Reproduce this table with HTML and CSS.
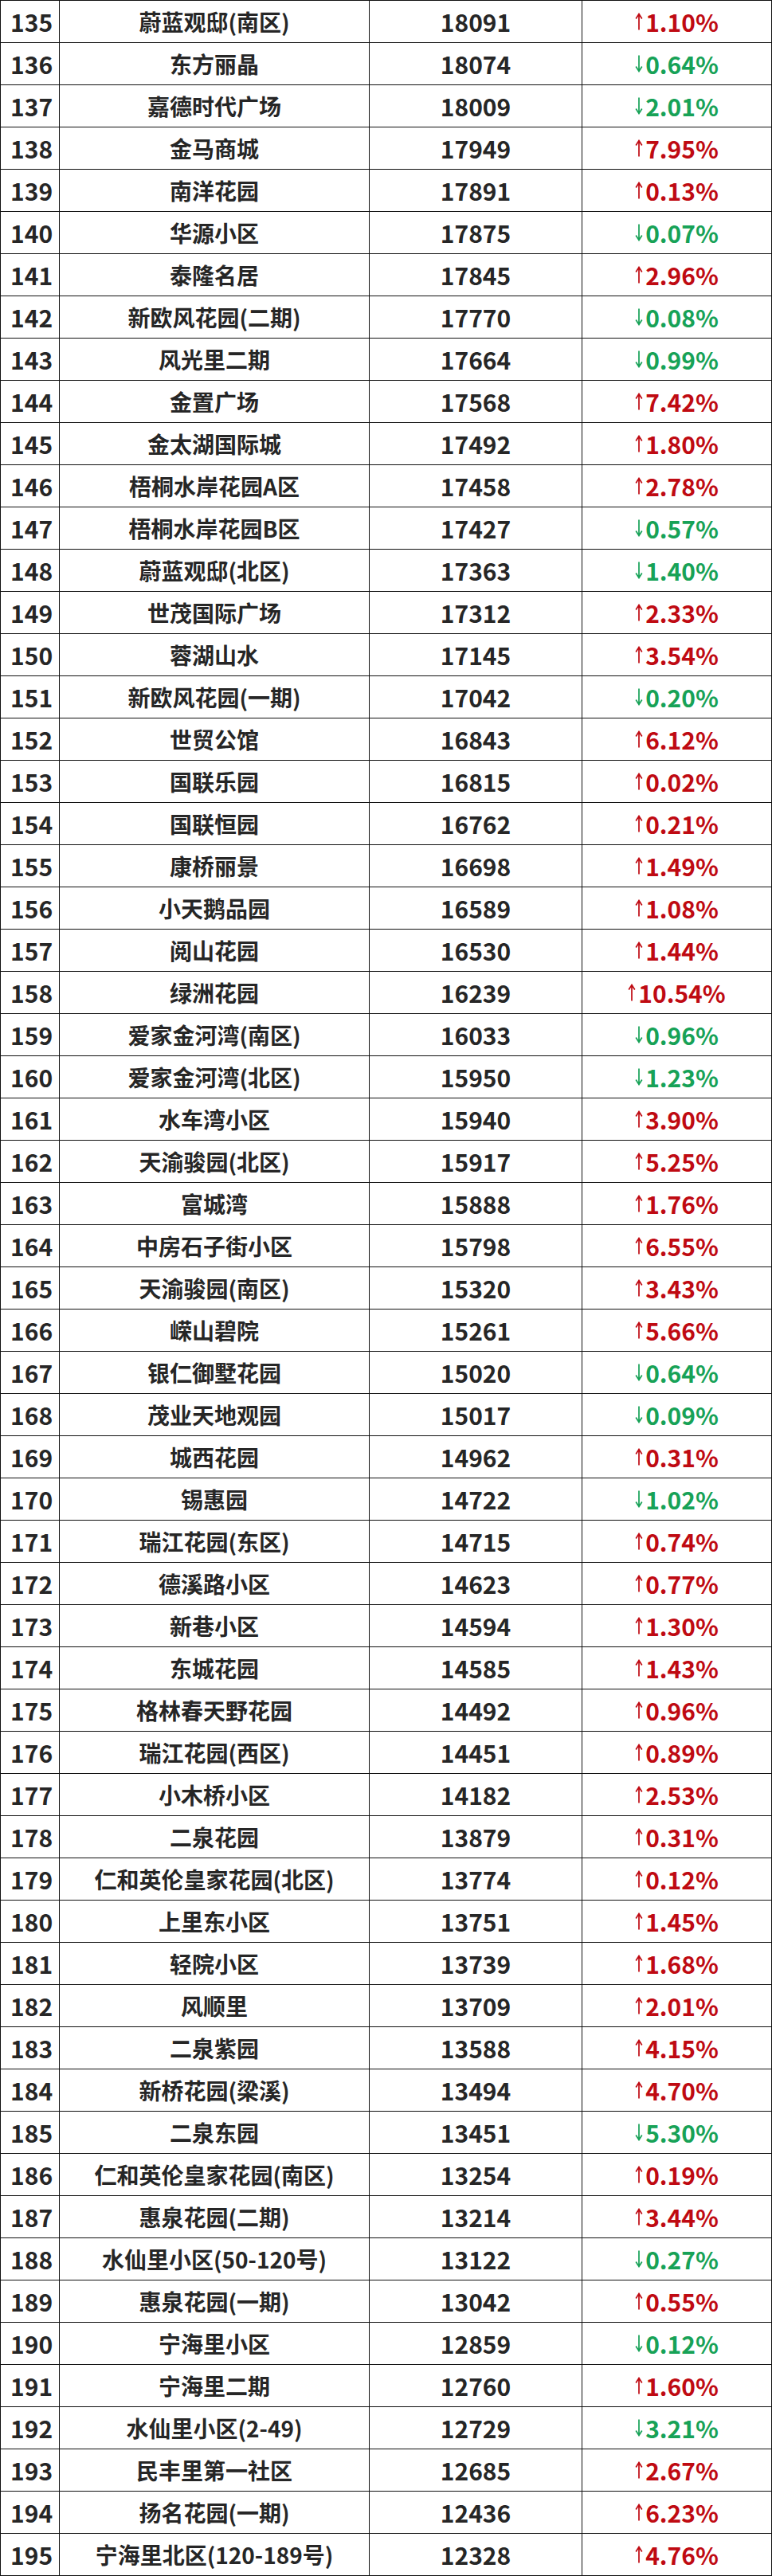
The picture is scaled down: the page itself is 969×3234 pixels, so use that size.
FILE: index.html
```html
<!DOCTYPE html>
<html lang="zh-CN">
<head>
<meta charset="utf-8">
<title>房价排行</title>
<link rel="stylesheet" href="styles.css">
</head>
<body>
<svg class="defs" width="0" height="0" aria-hidden="true">
  <symbol id="up" viewBox="0 0 10 22"><path d="M5 21.5V2 M1.2 7.5L5 1.5L8.8 7.5" fill="none" stroke="currentColor" stroke-width="1.7"/></symbol>
  <symbol id="down" viewBox="0 0 10 22"><path d="M5 0.5V20 M1.2 14.5L5 20.5L8.8 14.5" fill="none" stroke="currentColor" stroke-width="1.7"/></symbol>
</svg>
<div class="table">
<div class="c rank">135</div><div class="c name">蔚蓝观邸(南区)</div><div class="c num">18091</div><div class="c pct up"><svg class="arr"><use href="#up"/></svg>1.10%</div>
<div class="c rank">136</div><div class="c name">东方丽晶</div><div class="c num">18074</div><div class="c pct down"><svg class="arr"><use href="#down"/></svg>0.64%</div>
<div class="c rank">137</div><div class="c name">嘉德时代广场</div><div class="c num">18009</div><div class="c pct down"><svg class="arr"><use href="#down"/></svg>2.01%</div>
<div class="c rank">138</div><div class="c name">金马商城</div><div class="c num">17949</div><div class="c pct up"><svg class="arr"><use href="#up"/></svg>7.95%</div>
<div class="c rank">139</div><div class="c name">南洋花园</div><div class="c num">17891</div><div class="c pct up"><svg class="arr"><use href="#up"/></svg>0.13%</div>
<div class="c rank">140</div><div class="c name">华源小区</div><div class="c num">17875</div><div class="c pct down"><svg class="arr"><use href="#down"/></svg>0.07%</div>
<div class="c rank">141</div><div class="c name">泰隆名居</div><div class="c num">17845</div><div class="c pct up"><svg class="arr"><use href="#up"/></svg>2.96%</div>
<div class="c rank">142</div><div class="c name">新欧风花园(二期)</div><div class="c num">17770</div><div class="c pct down"><svg class="arr"><use href="#down"/></svg>0.08%</div>
<div class="c rank">143</div><div class="c name">风光里二期</div><div class="c num">17664</div><div class="c pct down"><svg class="arr"><use href="#down"/></svg>0.99%</div>
<div class="c rank">144</div><div class="c name">金置广场</div><div class="c num">17568</div><div class="c pct up"><svg class="arr"><use href="#up"/></svg>7.42%</div>
<div class="c rank">145</div><div class="c name">金太湖国际城</div><div class="c num">17492</div><div class="c pct up"><svg class="arr"><use href="#up"/></svg>1.80%</div>
<div class="c rank">146</div><div class="c name">梧桐水岸花园A区</div><div class="c num">17458</div><div class="c pct up"><svg class="arr"><use href="#up"/></svg>2.78%</div>
<div class="c rank">147</div><div class="c name">梧桐水岸花园B区</div><div class="c num">17427</div><div class="c pct down"><svg class="arr"><use href="#down"/></svg>0.57%</div>
<div class="c rank">148</div><div class="c name">蔚蓝观邸(北区)</div><div class="c num">17363</div><div class="c pct down"><svg class="arr"><use href="#down"/></svg>1.40%</div>
<div class="c rank">149</div><div class="c name">世茂国际广场</div><div class="c num">17312</div><div class="c pct up"><svg class="arr"><use href="#up"/></svg>2.33%</div>
<div class="c rank">150</div><div class="c name">蓉湖山水</div><div class="c num">17145</div><div class="c pct up"><svg class="arr"><use href="#up"/></svg>3.54%</div>
<div class="c rank">151</div><div class="c name">新欧风花园(一期)</div><div class="c num">17042</div><div class="c pct down"><svg class="arr"><use href="#down"/></svg>0.20%</div>
<div class="c rank">152</div><div class="c name">世贸公馆</div><div class="c num">16843</div><div class="c pct up"><svg class="arr"><use href="#up"/></svg>6.12%</div>
<div class="c rank">153</div><div class="c name">国联乐园</div><div class="c num">16815</div><div class="c pct up"><svg class="arr"><use href="#up"/></svg>0.02%</div>
<div class="c rank">154</div><div class="c name">国联恒园</div><div class="c num">16762</div><div class="c pct up"><svg class="arr"><use href="#up"/></svg>0.21%</div>
<div class="c rank">155</div><div class="c name">康桥丽景</div><div class="c num">16698</div><div class="c pct up"><svg class="arr"><use href="#up"/></svg>1.49%</div>
<div class="c rank">156</div><div class="c name">小天鹅品园</div><div class="c num">16589</div><div class="c pct up"><svg class="arr"><use href="#up"/></svg>1.08%</div>
<div class="c rank">157</div><div class="c name">阅山花园</div><div class="c num">16530</div><div class="c pct up"><svg class="arr"><use href="#up"/></svg>1.44%</div>
<div class="c rank">158</div><div class="c name">绿洲花园</div><div class="c num">16239</div><div class="c pct up"><svg class="arr"><use href="#up"/></svg>10.54%</div>
<div class="c rank">159</div><div class="c name">爱家金河湾(南区)</div><div class="c num">16033</div><div class="c pct down"><svg class="arr"><use href="#down"/></svg>0.96%</div>
<div class="c rank">160</div><div class="c name">爱家金河湾(北区)</div><div class="c num">15950</div><div class="c pct down"><svg class="arr"><use href="#down"/></svg>1.23%</div>
<div class="c rank">161</div><div class="c name">水车湾小区</div><div class="c num">15940</div><div class="c pct up"><svg class="arr"><use href="#up"/></svg>3.90%</div>
<div class="c rank">162</div><div class="c name">天渝骏园(北区)</div><div class="c num">15917</div><div class="c pct up"><svg class="arr"><use href="#up"/></svg>5.25%</div>
<div class="c rank">163</div><div class="c name">富城湾</div><div class="c num">15888</div><div class="c pct up"><svg class="arr"><use href="#up"/></svg>1.76%</div>
<div class="c rank">164</div><div class="c name">中房石子街小区</div><div class="c num">15798</div><div class="c pct up"><svg class="arr"><use href="#up"/></svg>6.55%</div>
<div class="c rank">165</div><div class="c name">天渝骏园(南区)</div><div class="c num">15320</div><div class="c pct up"><svg class="arr"><use href="#up"/></svg>3.43%</div>
<div class="c rank">166</div><div class="c name">嵘山碧院</div><div class="c num">15261</div><div class="c pct up"><svg class="arr"><use href="#up"/></svg>5.66%</div>
<div class="c rank">167</div><div class="c name">银仁御墅花园</div><div class="c num">15020</div><div class="c pct down"><svg class="arr"><use href="#down"/></svg>0.64%</div>
<div class="c rank">168</div><div class="c name">茂业天地观园</div><div class="c num">15017</div><div class="c pct down"><svg class="arr"><use href="#down"/></svg>0.09%</div>
<div class="c rank">169</div><div class="c name">城西花园</div><div class="c num">14962</div><div class="c pct up"><svg class="arr"><use href="#up"/></svg>0.31%</div>
<div class="c rank">170</div><div class="c name">锡惠园</div><div class="c num">14722</div><div class="c pct down"><svg class="arr"><use href="#down"/></svg>1.02%</div>
<div class="c rank">171</div><div class="c name">瑞江花园(东区)</div><div class="c num">14715</div><div class="c pct up"><svg class="arr"><use href="#up"/></svg>0.74%</div>
<div class="c rank">172</div><div class="c name">德溪路小区</div><div class="c num">14623</div><div class="c pct up"><svg class="arr"><use href="#up"/></svg>0.77%</div>
<div class="c rank">173</div><div class="c name">新巷小区</div><div class="c num">14594</div><div class="c pct up"><svg class="arr"><use href="#up"/></svg>1.30%</div>
<div class="c rank">174</div><div class="c name">东城花园</div><div class="c num">14585</div><div class="c pct up"><svg class="arr"><use href="#up"/></svg>1.43%</div>
<div class="c rank">175</div><div class="c name">格林春天野花园</div><div class="c num">14492</div><div class="c pct up"><svg class="arr"><use href="#up"/></svg>0.96%</div>
<div class="c rank">176</div><div class="c name">瑞江花园(西区)</div><div class="c num">14451</div><div class="c pct up"><svg class="arr"><use href="#up"/></svg>0.89%</div>
<div class="c rank">177</div><div class="c name">小木桥小区</div><div class="c num">14182</div><div class="c pct up"><svg class="arr"><use href="#up"/></svg>2.53%</div>
<div class="c rank">178</div><div class="c name">二泉花园</div><div class="c num">13879</div><div class="c pct up"><svg class="arr"><use href="#up"/></svg>0.31%</div>
<div class="c rank">179</div><div class="c name">仁和英伦皇家花园(北区)</div><div class="c num">13774</div><div class="c pct up"><svg class="arr"><use href="#up"/></svg>0.12%</div>
<div class="c rank">180</div><div class="c name">上里东小区</div><div class="c num">13751</div><div class="c pct up"><svg class="arr"><use href="#up"/></svg>1.45%</div>
<div class="c rank">181</div><div class="c name">轻院小区</div><div class="c num">13739</div><div class="c pct up"><svg class="arr"><use href="#up"/></svg>1.68%</div>
<div class="c rank">182</div><div class="c name">风顺里</div><div class="c num">13709</div><div class="c pct up"><svg class="arr"><use href="#up"/></svg>2.01%</div>
<div class="c rank">183</div><div class="c name">二泉紫园</div><div class="c num">13588</div><div class="c pct up"><svg class="arr"><use href="#up"/></svg>4.15%</div>
<div class="c rank">184</div><div class="c name">新桥花园(梁溪)</div><div class="c num">13494</div><div class="c pct up"><svg class="arr"><use href="#up"/></svg>4.70%</div>
<div class="c rank">185</div><div class="c name">二泉东园</div><div class="c num">13451</div><div class="c pct down"><svg class="arr"><use href="#down"/></svg>5.30%</div>
<div class="c rank">186</div><div class="c name">仁和英伦皇家花园(南区)</div><div class="c num">13254</div><div class="c pct up"><svg class="arr"><use href="#up"/></svg>0.19%</div>
<div class="c rank">187</div><div class="c name">惠泉花园(二期)</div><div class="c num">13214</div><div class="c pct up"><svg class="arr"><use href="#up"/></svg>3.44%</div>
<div class="c rank">188</div><div class="c name">水仙里小区(50-120号)</div><div class="c num">13122</div><div class="c pct down"><svg class="arr"><use href="#down"/></svg>0.27%</div>
<div class="c rank">189</div><div class="c name">惠泉花园(一期)</div><div class="c num">13042</div><div class="c pct up"><svg class="arr"><use href="#up"/></svg>0.55%</div>
<div class="c rank">190</div><div class="c name">宁海里小区</div><div class="c num">12859</div><div class="c pct down"><svg class="arr"><use href="#down"/></svg>0.12%</div>
<div class="c rank">191</div><div class="c name">宁海里二期</div><div class="c num">12760</div><div class="c pct up"><svg class="arr"><use href="#up"/></svg>1.60%</div>
<div class="c rank">192</div><div class="c name">水仙里小区(2-49)</div><div class="c num">12729</div><div class="c pct down"><svg class="arr"><use href="#down"/></svg>3.21%</div>
<div class="c rank">193</div><div class="c name">民丰里第一社区</div><div class="c num">12685</div><div class="c pct up"><svg class="arr"><use href="#up"/></svg>2.67%</div>
<div class="c rank">194</div><div class="c name">扬名花园(一期)</div><div class="c num">12436</div><div class="c pct up"><svg class="arr"><use href="#up"/></svg>6.23%</div>
<div class="c rank">195</div><div class="c name">宁海里北区(120-189号)</div><div class="c num">12328</div><div class="c pct up"><svg class="arr"><use href="#up"/></svg>4.76%</div>
</div>
</body>
</html>
```

FILE: styles.css
```css
html, body {
  margin: 0;
  padding: 0;
  background: #ffffff;
}

.defs {
  position: absolute;
  width: 0;
  height: 0;
  overflow: hidden;
}

.table {
  display: grid;
  grid-template-columns: 74px 389px 267px 238px;
  grid-auto-rows: 53px;
  width: 969px;
  box-sizing: border-box;
  border-top: 1px solid #111;
  border-left: 1px solid #111;
  font-family: "Noto Sans CJK SC", "Noto Sans", sans-serif;
  font-weight: 700;
  color: #262626;
}

.c {
  box-sizing: border-box;
  border-right: 1px solid #111;
  border-bottom: 1px solid #111;
  display: flex;
  align-items: center;
  justify-content: center;
  white-space: nowrap;
  line-height: 1;
}

.rank,
.num,
.pct {
  font-size: 30px;
}

.rank {
  justify-content: flex-start;
  padding-left: 12px;
}

.name {
  font-size: 28px;
}

.pct.up {
  color: #bf0a12;
}

.pct.down {
  color: #17a257;
}

.arr {
  width: 10px;
  height: 22px;
  margin-right: 3px;
  flex: none;
}
```
